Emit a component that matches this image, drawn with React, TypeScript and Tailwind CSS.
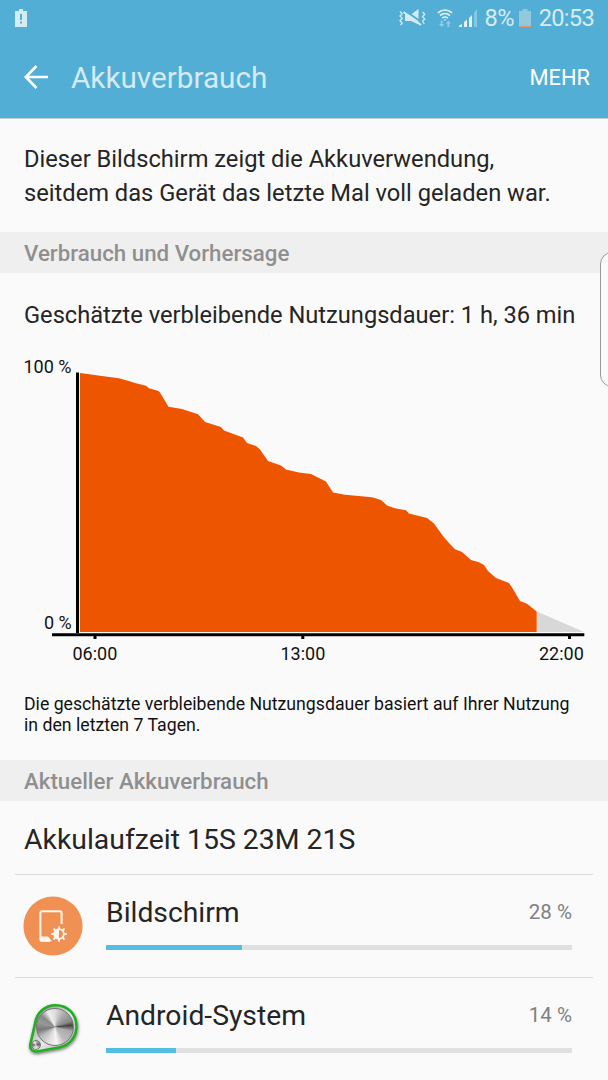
import React from 'react';

interface UsageEntry {
  name: string;
  percent: number;
  barWidth: number;
  icon: React.ReactNode;
}

const BatteryAlertIcon = () => (
  <svg className="w-3 h-[18px]" viewBox="0 0 12 18">
    <path d="M4 0h4v2h4v16H0V2h4z" fill="#d6ecf5" />
    <path d="M5 5h2v6H5zM5 12.5h2v2H5z" fill="#52aed4" />
  </svg>
);

const MuteVibrateIcon = () => (
  <svg className="w-[28px] h-5" viewBox="0 0 28 20">
    <g fill="none" stroke="#d6ecf5" strokeWidth="1.3">
      <path d="M1 3.5l2.2 2.2L1 8l2.2 2.4L1 12.7l2.2 2.3L1.6 17" />
      <path d="M23.5 4l2.3 2.2-2.3 2.4 2.3 2.4-2.3 2.4 1.8 2.6" />
    </g>
    <path d="M6 6.5h6L19.5 1v15.5L12 13H6z" fill="#d6ecf5" />
    <path d="M5.5 2.2L23 14.5" stroke="#52aed4" strokeWidth="2" />
    <path d="M4.5 4L22 17" stroke="#d6ecf5" strokeWidth="2" />
  </svg>
);

const WifiIcon = () => (
  <svg className="w-4 h-[18px]" viewBox="0 0 16 18">
    <g fill="none" stroke="#e3f2f8" strokeWidth="1.6">
      <path d="M.8 3.8Q8-1.8 15.2 3.8" />
      <path d="M3 6.5Q8 2.6 13 6.5" />
      <path d="M5.2 9Q8 7 10.8 9" />
    </g>
    <path d="M6.5 10.5h3L8 12z" fill="#e3f2f8" />
    <path d="M5.5 11.5v3.5h1.8L4.7 18 2 15h1.7v-3.5zM12.3 18v-3.5H14l-2.6-3-2.7 3h1.8V18z" fill="#94cde4" />
  </svg>
);

const SignalIcon = () => (
  <svg className="w-[18px] h-[18px]" viewBox="0 0 18 18">
    <path d="M0 18v-1.5L3 15v3zM5 18v-5l3-2.5V18zM10 18V9l3-3v12z" fill="#e3f2f8" />
    <path d="M15 18V3.5L18 0v18z" fill="#87c6e0" />
  </svg>
);

const BatteryIcon = () => (
  <svg className="w-3 h-[18px]" viewBox="0 0 12 18">
    <path d="M3.5 0h5v2H12v16H0V2h3.5z" fill="#93c8dd" />
    <path d="M0 16.8h12V18H0z" fill="#d69a7c" />
  </svg>
);

const BackArrow = () => (
  <svg className="w-6 h-6" viewBox="0 0 24 24" fill="none" stroke="#fff" strokeWidth="2.6">
    <path d="M12.5 1L1.8 12l10.7 11M1.8 12H24" />
  </svg>
);

const ScreenIcon = () => (
  <svg className="w-[60px] h-[60px]" viewBox="0 0 60 60">
    <circle cx="30" cy="30" r="29.6" fill="#f09153" />
    <path d="M38.6 28V17a1.7 1.7 0 0 0-1.7-1.7H19.1a1.7 1.7 0 0 0-1.7 1.7v26.300a1.700 1.700 0 0 0 1.700 1.700H27" fill="none" stroke="#fff5ec" strokeWidth="2" />
    <path d="M17 40.500h8l4 4.800H18z" fill="#fff5ec" />
    <g stroke="#fff5ec" strokeWidth="1.8">
      <path d="M36 30.200v3M36 42.800v3M28.200 38h3M40.800 38h3M30.500 32.500l2.100 2.100M39.400 41.400l2.100 2.100M41.500 32.500l-2.100 2.100M32.600 41.400l-2.100 2.100" />
      <circle cx="36" cy="38" r="4.800" fill="none" />
    </g>
    <path d="M36 33.400a4.600 4.600 0 0 0 0 9.200z" fill="#fff5ec" />
  </svg>
);

// Brushed metal knob, the conic gradient gives the radial sheen
const SystemIcon = () => (
  <div className="relative w-[60px] h-[60px]">
    <svg className="w-[60px] h-[60px]" viewBox="0 0 60 60">
      <defs>
        <linearGradient id="plate" x1="0" y1="0" x2="1" y2="1">
          <stop offset="0" stopColor="#777" />
          <stop offset=".55" stopColor="#e8e8e8" />
          <stop offset="1" stopColor="#999" />
        </linearGradient>
        <filter id="shade" x="-20%" y="-20%" width="150%" height="150%">
          <feDropShadow dx="0.5" dy="1.5" stdDeviation="1.4" floodOpacity=".55" />
        </filter>
      </defs>
      <path
        d="M12 25C13.5 13.5 22 6.2 32.5 6.2C44.5 6.2 53.5 15 53.5 27.5C53.5 38 46.5 46 37 48.3L14 52.5C10 53 6.500 50 7.300 45.500Z"
        fill="url(#plate)"
        stroke="#21ae22"
        strokeWidth="2.6"
        filter="url(#shade)"
      />
    </svg>
    <div className="absolute left-[13px] top-[9px] w-[38px] h-[38px] rounded-full border border-[#777] bg-[conic-gradient(from_0deg,#ddd,#aaa_35deg,#888_70deg,#444_84deg,#aaa_105deg,#bbb_145deg,#f5f5f5_175deg,#ddd_205deg,#bbb_235deg,#777_260deg,#999_285deg,#888_310deg,#eee_335deg,#ddd)]" />
    <div className="absolute left-[8px] top-[41px] w-[10px] h-[10px] rounded-full border border-[#777] bg-[conic-gradient(#bbb,#666_80deg,#aaa_120deg,#eee_180deg,#bbb_230deg,#666_270deg,#eee_330deg,#bbb)]" />
  </div>
);

const usage: UsageEntry[] = [
  { name: 'Bildschirm', percent: 28, barWidth: 29.2, icon: <ScreenIcon /> },
  { name: 'Android-System', percent: 14, barWidth: 15.1, icon: <SystemIcon /> },
];

const SectionHeader = ({ title }: { title: string }) => (
  <h2 className="h-[41px] flex items-center px-6 bg-[#efefef] text-[22.3px] font-medium text-[#8f8f8f]">
    <span className="pt-0.5">{title}</span>
  </h2>
);

const BatteryChart = () => (
  <svg className="block w-[608px] h-[330px] text-[18px]" viewBox="0 350 608 330">
    <path
      d="M80 373L100 375.7L119 378.3L128 380.7L135 383L146 385.7L149 388.3L158.5 391L160 392.5L168.5 406.7L182 409L198 414.3L205 422L221 427L224 430.5L243 437.5L247 443L256 446L260 449.5L268 461L281 465.5L286 469.5L299 472.5L311 474L326 481.5L333 492.5L345 494.7L372 497.3L381 500L387 505.5L395 508.3L406 510.3L409 513.5L427 518L434 523.5L443 536L449 543L455 549.3L462 552L471 560L479 562.3L484 565L488 571L496 578L509 583L513 589L520 601L527 603.8L536.7 611.5V632H80Z"
      fill="#ed5500"
    />
    <path d="M537 611.5L584 632H537Z" fill="#d8d8d8" />
    <path d="M76 372.5h3V633h-3zM52 633.3H584.3V636.3H52zM93.5 636h3v3h-3zM301.3 636h3v3h-3zM568 636h3v3h-3z" fill="#000" />
    <g fill="#111">
      <text x="23.5" y="373">100 %</text>
      <text x="44" y="629">0 %</text>
      <text x="72.5" y="660">06:00</text>
      <text x="280.5" y="660">13:00</text>
      <text x="539" y="660">22:00</text>
    </g>
  </svg>
);

const App: React.FC = () => {
  return (
    <div className="relative w-[608px] h-[1080px] overflow-hidden bg-[#fafafa] font-['Roboto',sans-serif] text-[#252525]">
      <header className="h-[119px] bg-[#52aed4] border-b border-[#c5ccd4]">
        <div className="h-9 flex items-center justify-between pl-[15px] pr-[14px]">
          <BatteryAlertIcon />
          <div className="flex items-center text-[23.6px] leading-9 text-[#d6ecf5]">
            <MuteVibrateIcon />
            <span className="ml-[10px]"><WifiIcon /></span>
            <span className="ml-[6px]"><SignalIcon /></span>
            <span className="ml-2 tracking-[-0.7px]">8%</span>
            <span className="ml-[5px]"><BatteryIcon /></span>
            <span className="ml-2 tracking-[-0.7px]">20:53</span>
          </div>
        </div>
        <div className="h-[82px] flex items-center pl-6 pr-[18px]">
          <BackArrow />
          <h1 className="ml-[23px] pt-0.5 text-[29.7px] text-[#d4ebf5]">Akkuverbrauch</h1>
          <button className="ml-auto pt-0.5 text-[21.8px] text-white">MEHR</button>
        </div>
      </header>

      <p className="h-[113px] px-6 pt-[23px] text-[23.7px] leading-[34px]">
        Dieser Bildschirm zeigt die Akkuverwendung,<br />
        seitdem das Gerät das letzte Mal voll geladen war.
      </p>

      <SectionHeader title="Verbrauch und Vorhersage" />
      <p className="h-[77px] px-6 pt-[25px] text-[23.65px] leading-[34px] whitespace-nowrap">
        Geschätzte verbleibende Nutzungsdauer: 1 h, 36 min
      </p>
      <BatteryChart />
      <p className="h-20 px-6 pt-[14px] text-[17.7px] leading-[21px] text-[#111] whitespace-nowrap">
        Die geschätzte verbleibende Nutzungsdauer basiert auf Ihrer Nutzung<br />
        in den letzten 7 Tagen.
      </p>

      <SectionHeader title="Aktueller Akkuverbrauch" />
      <h3 className="h-[73px] px-6 flex items-center text-[28.4px]">
        <span className="pt-1.5">Akkulaufzeit 15S 23M 21S</span>
      </h3>

      <ul className="px-[15px]">
        {usage.map((entry) => (
          <li key={entry.name} className="h-[103px] flex border-t border-[#dcdcdc] pl-2 pr-[21px]">
            <div className="pt-[21px]">{entry.icon}</div>
            <div className="flex-1 ml-[23px]">
              <div className="h-[70px] pt-[17px] flex justify-between">
                <span className="pt-px text-[28.3px] leading-10">{entry.name}</span>
                <span className="text-[20.5px] leading-10 text-[#808080]">{entry.percent} %</span>
              </div>
              <div className="h-[5px] bg-[#e1e0e1]">
                <div className="h-full bg-[#53bde2]" style={{ width: `${entry.barWidth}%` }} />
              </div>
            </div>
          </li>
        ))}
      </ul>

      {/* Edge panel handle, runs off the right side of the screen */}
      <div className="absolute left-[600px] top-[252px] w-8 h-[135px] rounded-[12px] border border-[#999] bg-[#fafafa]" />
    </div>
  );
};

export default App;
